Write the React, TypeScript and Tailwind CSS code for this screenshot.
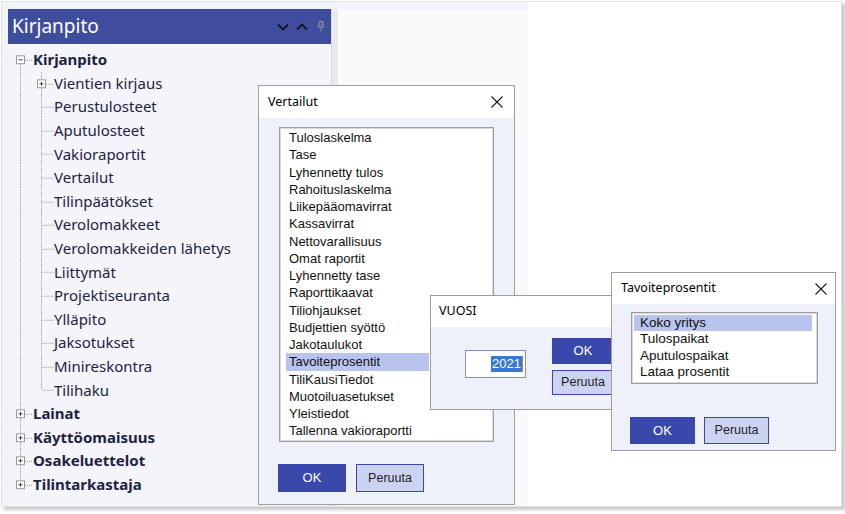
import React from "react";

type Row = {
    label: string;
    level: 1 | 2;
    bold?: boolean;
    box?: "plus" | "minus";
    above?: boolean;
    below?: boolean;
    last?: boolean;
};

const rows: Row[] = [
    { label: "Kirjanpito", level: 1, bold: true, box: "minus", below: true },
    { label: "Vientien kirjaus", level: 2, box: "plus" },
    { label: "Perustulosteet", level: 2 },
    { label: "Aputulosteet", level: 2 },
    { label: "Vakioraportit", level: 2 },
    { label: "Vertailut", level: 2 },
    { label: "Tilinpäätökset", level: 2 },
    { label: "Verolomakkeet", level: 2 },
    { label: "Verolomakkeiden lähetys", level: 2 },
    { label: "Liittymät", level: 2 },
    { label: "Projektiseuranta", level: 2 },
    { label: "Ylläpito", level: 2 },
    { label: "Jaksotukset", level: 2 },
    { label: "Minireskontra", level: 2 },
    { label: "Tilihaku", level: 2, last: true },
    { label: "Lainat", level: 1, bold: true, box: "plus", above: true, below: true },
    { label: "Käyttöomaisuus", level: 1, bold: true, box: "plus", above: true, below: true },
    { label: "Osakeluettelot", level: 1, bold: true, box: "plus", above: true, below: true },
    { label: "Tilintarkastaja", level: 1, bold: true, box: "plus", above: true },
];

const vertailut = [
    "Tuloslaskelma",
    "Tase",
    "Lyhennetty tulos",
    "Rahoituslaskelma",
    "Liikepääomavirrat",
    "Kassavirrat",
    "Nettovarallisuus",
    "Omat raportit",
    "Lyhennetty tase",
    "Raporttikaavat",
    "Tiliohjaukset",
    "Budjettien syöttö",
    "Jakotaulukot",
    "Tavoiteprosentit",
    "TiliKausiTiedot",
    "Muotoiluasetukset",
    "Yleistiedot",
    "Tallenna vakioraportti",
];

const tavoite = ["Koko yritys", "Tulospaikat", "Aputulospaikat", "Lataa prosentit"];

const DOT = "#9a9a9a";

/**
 * One 21px wide column of tree connector lines
 */
const Branch = ({
    box,
    above,
    below,
    stub = true,
}: {
    box?: "plus" | "minus";
    above?: boolean;
    below?: boolean;
    stub?: boolean;
}) => (
    <svg width="21" height="100%" viewBox="0 0 21 24" preserveAspectRatio="none" className="h-full shrink-0">
        {above && <line x1="8.5" y1="0" x2="8.5" y2={box ? 7.5 : 12} stroke={DOT} strokeDasharray="1 1" />}
        {below && <line x1="8.5" y1={box ? 16.5 : 12} x2="8.5" y2="24" stroke={DOT} strokeDasharray="1 1" />}
        {stub && <line x1={box ? 13 : 9.5} y1="12.5" x2="21" y2="12.5" stroke={DOT} strokeDasharray="1 1" />}
        {box && (
            <>
                <rect x="4.5" y="8" width="8" height="8" fill="#ffffff" stroke="#979797" />
                <line x1="6.5" y1="12" x2="10.5" y2="12" stroke="#3a3f5c" />
                {box === "plus" && <line x1="8.5" y1="10" x2="8.5" y2="14" stroke="#3a3f5c" />}
            </>
        )}
    </svg>
);

const CloseX = () => (
    <svg width="12" height="12" viewBox="0 0 12 12">
        <path d="M0.5 0.5 L11.5 11.5 M11.5 0.5 L0.5 11.5" stroke="#1a1a1a" strokeWidth="1.1" />
    </svg>
);

const OkButton = ({ className }: { className: string }) => (
    <div className={`flex items-center justify-center bg-[#3a48ab] text-[13px] text-white ${className}`}>OK</div>
);

const CancelButton = ({ className }: { className: string }) => (
    <div className={`flex items-center justify-center border border-[#3a48ab] bg-[#ccd3f1] text-[12.5px] text-[#1e1e2a] ${className}`}>
        Peruuta
    </div>
);

export default function App() {
    return (
        <div className="relative h-[514px] w-[845px] overflow-hidden bg-white font-['Liberation_Sans',Arial,sans-serif]">
            {/* Screenshot frame */}
            <div className="ml-[1px] mt-[1px] flex h-[506px] w-[841px] border border-[#e2e2e2] bg-white shadow-[3px_3px_3px_rgba(0,0,0,0.22)]">
                {/* Application area */}
                <div className="flex h-full w-[526px] bg-[#f1f3f8] pl-[6px] pt-[7px]">
                    {/* Tree panel */}
                    <div className="flex h-full w-[323px] flex-col bg-[#f3f5fb]">
                        <div className="flex h-[35px] items-center bg-[#3f4d9e] pl-[4px] pr-[6px]">
                            <span className="flex-1 font-['Noto_Sans',sans-serif] text-[19px] text-white">Kirjanpito</span>
                            <svg width="12" height="8" viewBox="0 0 12 8" className="mr-[7px]">
                                <path d="M1 1.5 L6 6.5 L11 1.5" fill="none" stroke="#141420" strokeWidth="1.8" />
                            </svg>
                            <svg width="12" height="8" viewBox="0 0 12 8" className="mr-[9px]">
                                <path d="M1 6.5 L6 1.5 L11 6.5" fill="none" stroke="#141420" strokeWidth="1.8" />
                            </svg>
                            <svg width="8" height="11" viewBox="0 0 8 11">
                                <path d="M2 0.5 H6 V6 M2 0.5 V6 M0.5 6 H7.5 M4 6 V10.5 M5 1 V6" fill="none" stroke="#8c8f9c" strokeWidth="1" />
                            </svg>
                        </div>
                        <div className="flex flex-col pl-[4px] pt-[4px] font-['Noto_Sans',sans-serif] text-[15px] text-[#1d2343]">
                            {rows.map((r) => (
                                <div key={r.label} className="flex h-[23.6px] items-center">
                                    {r.level === 1 ? (
                                        <Branch box={r.box} above={r.above} below={r.below} />
                                    ) : (
                                        <>
                                            <Branch above below stub={false} />
                                            <Branch box={r.box} above below={!r.last} />
                                        </>
                                    )}
                                    <span className={`whitespace-nowrap leading-none ${r.bold ? "font-bold" : ""}`}>{r.label}</span>
                                </div>
                            ))}
                        </div>
                    </div>
                    {/* Splitter */}
                    <div className="h-full w-[7px] border-l border-[#d9dbe0] bg-[#e9eaee]" />
                    {/* Empty document area */}
                    <div className="h-full flex-1 bg-[#fafafa]" />
                </div>
                <div className="flex-1 bg-white" />
            </div>

            {/* Vertailut dialog */}
            <div className="absolute left-[258px] top-[85px] flex h-[420px] w-[257px] flex-col border border-[#9e9e9e] bg-[#eef1f9]">
                <div className="flex h-[32px] items-center justify-between bg-white pl-[9px] pr-[11px]">
                    <span className="font-['Noto_Sans',sans-serif] text-[12.5px] text-black">Vertailut</span>
                    <CloseX />
                </div>
                <div className="ml-[20px] mt-[9px] h-[315px] w-[215px] border border-[#a0a0a0] bg-white">
                    <div className="h-full w-full border border-[#d8d8d8] pl-[5px]">
                        {vertailut.map((v) => (
                            <div
                                key={v}
                                className={`h-[17.25px] w-[143px] pl-[3px] text-[13px] leading-[17.25px] text-[#111] ${v === "Tavoiteprosentit" ? "bg-[#b8c3ee]" : ""}`}
                            >
                                {v}
                            </div>
                        ))}
                    </div>
                </div>
                <div className="ml-[19px] mt-[22px] flex gap-[10px]">
                    <OkButton className="h-[28px] w-[68px]" />
                    <CancelButton className="h-[28px] w-[68px]" />
                </div>
            </div>

            {/* VUOSI dialog */}
            <div className="absolute left-[430px] top-[295px] flex h-[115px] w-[200px] flex-col border border-[#9e9e9e] bg-[#eef1f9]">
                <div className="flex h-[31px] items-center bg-white pl-[8px]">
                    <span className="font-['Noto_Sans',sans-serif] text-[12.5px] text-black">VUOSI</span>
                </div>
                <div className="flex">
                    <div className="ml-[34px] mt-[23px] flex h-[28px] w-[61px] items-center justify-end border border-[#8290b8] bg-white pr-[2px]">
                        <span className="bg-[#3a78d6] px-[1px] text-[13px] leading-[16px] text-white">2021</span>
                        <span className="h-[16px] w-[1px] bg-[#e07a1a]" />
                    </div>
                    <div className="ml-[26px] mt-[11px] flex flex-col gap-[6px]">
                        <OkButton className="h-[26px] w-[62px]" />
                        <CancelButton className="h-[25px] w-[62px]" />
                    </div>
                </div>
            </div>

            {/* Tavoiteprosentit dialog */}
            <div className="absolute left-[611px] top-[272px] flex h-[179px] w-[225px] flex-col border border-[#9e9e9e] bg-[#eef1f9]">
                <div className="flex h-[31px] items-center justify-between bg-white pl-[9px] pr-[8px]">
                    <span className="font-['Noto_Sans',sans-serif] text-[12.5px] text-black">Tavoiteprosentit</span>
                    <CloseX />
                </div>
                <div className="ml-[19px] mt-[8px] h-[72px] w-[187px] border border-[#a0a0a0] bg-white">
                    <div className="h-full w-full border border-[#d8d8d8] pl-[1px] pt-[1px]">
                        {tavoite.map((t) => (
                            <div
                                key={t}
                                className={`h-[16.4px] w-[178px] pl-[6px] text-[13.5px] leading-[16.4px] text-[#111] ${t === "Koko yritys" ? "bg-[#b8c3ee]" : ""}`}
                            >
                                {t}
                            </div>
                        ))}
                    </div>
                </div>
                <div className="ml-[18px] mt-[33px] flex gap-[9px]">
                    <OkButton className="h-[27px] w-[65px]" />
                    <CancelButton className="h-[27px] w-[65px]" />
                </div>
            </div>
        </div>
    );
}
